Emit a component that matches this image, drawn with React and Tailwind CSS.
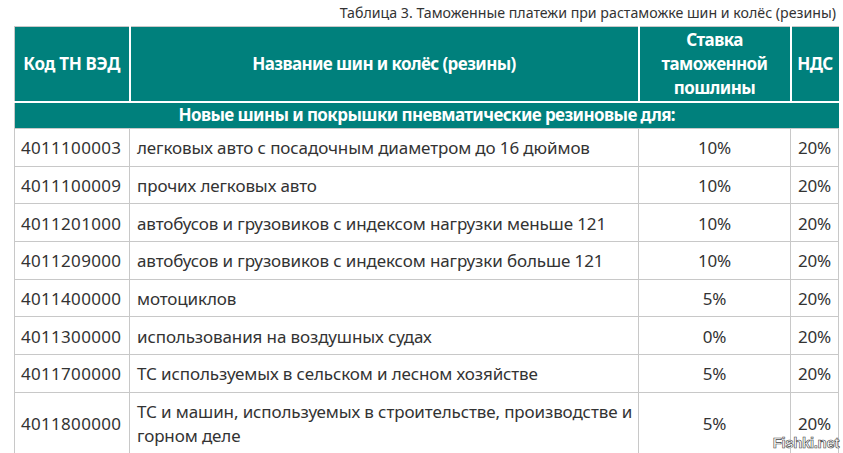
const rows = [
  ['4011100003', 'легковых авто с посадочным диаметром до 16 дюймов', '10%', '20%'],
  ['4011100009', 'прочих легковых авто', '10%', '20%'],
  ['4011201000', 'автобусов и грузовиков с индексом нагрузки меньше 121', '10%', '20%'],
  ['4011209000', 'автобусов и грузовиков с индексом нагрузки больше 121', '10%', '20%'],
  ['4011400000', 'мотоциклов', '5%', '20%'],
  ['4011300000', 'использования на воздушных судах', '0%', '20%'],
  ['4011700000', 'ТС используемых в сельском и лесном хозяйстве', '5%', '20%'],
  ['4011800000', ['ТС и машин, используемых в строительстве, производстве и', 'горном деле'], '5%', '20%'],
];

export default function App() {
  return (
    <div className="w-[843px] h-[453px] overflow-hidden bg-white relative" style={{ fontFamily: '"Noto Sans", sans-serif' }}>
      <div className="pl-[14px] pr-[5px]">
        <div className="h-[26px] text-right text-[14.2px] leading-[26px] text-[#333] pr-[2px]">
          Таблица 3. Таможенные платежи при растаможке шин и колёс (резины)
        </div>
        <table className="border-collapse text-[17px] text-[#333] w-[824px] table-fixed">
          <colgroup>
            <col className="w-[115px]" />
            <col className="w-[509px]" />
            <col className="w-[152px]" />
            <col className="w-[48px]" />
          </colgroup>
          <thead className="tracking-[-0.6px]">
            <tr className="h-[75px] bg-[#00807c] text-white font-semibold">
              <th className="border-l border-t border-l-[#c8c8c8] border-t-[#c8c8c8] border-r-2 border-r-white leading-[22px] font-bold tracking-[-0.3px]">Код ТН ВЭД</th>
              <th className="border-t border-t-[#c8c8c8] border-r-2 border-r-white">Название шин и колёс (резины)</th>
              <th className="border-t border-t-[#c8c8c8] border-r-2 border-r-white leading-[24px]">Ставка таможенной пошлины</th>
              <th className="border-t border-t-[#c8c8c8]">НДС</th>
            </tr>
            <tr className="h-[27px] bg-[#00807c] text-white font-semibold">
              <th colSpan={4} className="border-l border-l-[#c8c8c8] border-t-2 border-t-white leading-[22px]">
                Новые шины и покрышки пневматические резиновые для:
              </th>
            </tr>
          </thead>
          <tbody className="tracking-[-0.12px]">
            {rows.map((r, i) => (
              <tr key={i} className={i === rows.length - 1 ? 'h-[62px]' : 'h-[37.7px]'}>
                <td className="border border-[#c8c8c8] px-[6px] pt-[2px] leading-[24px] tracking-[0.3px]">{r[0]}</td>
                <td className="border border-[#c8c8c8] px-[7px] pt-[2px] leading-[24px] whitespace-nowrap">
                  {Array.isArray(r[1]) ? (
                    <>
                      {r[1][0]}
                      <br />
                      {r[1][1]}
                    </>
                  ) : (
                    r[1]
                  )}
                </td>
                <td className="border border-[#c8c8c8] pt-[2px] text-center leading-[24px]">{r[2]}</td>
                <td className="border border-[#c8c8c8] pt-[2px] text-center leading-[24px]">{r[3]}</td>
              </tr>
            ))}
          </tbody>
        </table>
      </div>
      <div className="absolute right-[4px] bottom-[3px] text-[15px] font-bold text-white leading-none tracking-tight" style={{ fontFamily: '"Liberation Sans", sans-serif', WebkitTextStroke: '0.6px #444' }}>
        Fishki.net
      </div>
    </div>
  );
}
